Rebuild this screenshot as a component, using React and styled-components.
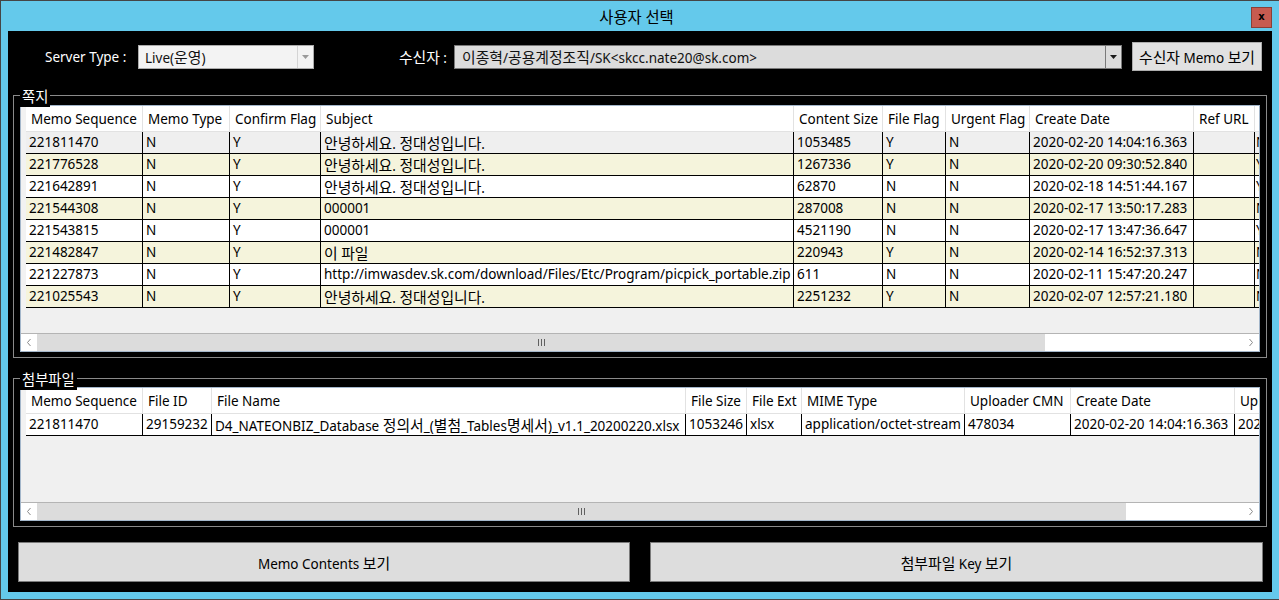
import React from "react";
import styled, { createGlobalStyle } from "styled-components";

const FONT = `"Noto Sans", "Noto Sans CJK KR", sans-serif`;

const GlobalStyle = createGlobalStyle`
  html, body { margin: 0; padding: 0; background: #64c9eb; }
  body { font-family: ${FONT}; font-size: 13.5px; color: #000; }
  * { box-sizing: border-box; }
`;

const Hangul = styled.span`
  font-family: "Noto Sans CJK KR", sans-serif;
  font-size: 1.1em;
`;

const HANGUL_RE = /([\u1100-\u11FF\u3130-\u318F\uAC00-\uD7A3]+)/;

function T({ children }) {
  const text = String(children);
  const parts = text.split(HANGUL_RE);
  return (
    <>
      {parts.map((p, i) =>
        i % 2 === 1 ? <Hangul key={i}>{p}</Hangul> : p ? <React.Fragment key={i}>{p}</React.Fragment> : null
      )}
    </>
  );
}

const Window = styled.div`
  width: 1279px;
  height: 600px;
  background: #64c9eb;
  border-top: 1px solid #454545;
  border-left: 1px solid #454545;
  border-bottom: 1px solid #454545;
  display: flex;
  flex-direction: column;
`;

const TitleBar = styled.div`
  height: 30px;
  flex: 0 0 30px;
  display: grid;
  grid-template-columns: 1fr auto 1fr;
  align-items: center;
  padding-right: 7px;
`;

const Title = styled.div`
  grid-column: 2;
  font-size: 14px;
  color: #000;
  line-height: 30px;
`;

const CloseButton = styled.div`
  grid-column: 3;
  justify-self: end;
  width: 21px;
  height: 21px;
  margin-top: 1px;
  background: #c75b50;
  border: 1px solid #8a3f38;
  display: flex;
  align-items: center;
  justify-content: center;
  font-family: "DejaVu Sans", sans-serif;
  font-weight: bold;
  font-size: 10px;
  line-height: 1;
  color: #000;
  padding-bottom: 2px;
`;

const Client = styled.div`
  margin: 0 7px 0 7px;
  height: 561px;
  background: #000;
  display: flex;
  flex-direction: column;
`;

const TopRow = styled.div`
  margin-top: 11px;
  height: 29px;
  padding-left: 37px;
  display: flex;
  align-items: center;
`;

const FieldLabel = styled.div`
  flex: 0 0 ${(p) => p.$w}px;
  color: #fff;
  text-align: ${(p) => p.$align || "left"};
  padding-right: ${(p) => p.$pr || 0}px;
  white-space: nowrap;
`;

const Combo = styled.div`
  flex: 0 0 ${(p) => p.$w}px;
  height: 24px;
  background: ${(p) => p.$bg};
  border: 1px solid ${(p) => p.$border};
  display: flex;
  align-items: stretch;
`;

const ComboText = styled.div`
  flex: 1;
  padding-left: ${(p) => p.$pl}px;
  line-height: 22px;
  color: #111;
  white-space: nowrap;
  overflow: hidden;
`;

const ComboArrow = styled.div`
  flex: 0 0 16px;
  border-left: 1px solid ${(p) => p.$sep};
  display: flex;
  align-items: center;
  justify-content: center;
`;

const Button = styled.div`
  flex: 0 0 ${(p) => p.$w}px;
  height: ${(p) => p.$h}px;
  margin-left: ${(p) => p.$ml || 0}px;
  background: ${(p) => p.$bg || "#e1e1e1"};
  border: 1px solid ${(p) => p.$border || "#adadad"};
  display: flex;
  align-items: center;
  justify-content: center;
  color: #000;
`;

const ButtonLabel = styled.span`
  white-space: nowrap;
`;

const Group = styled.div`
  position: relative;
  margin: ${(p) => p.$mt}px 0 0 5px;
  width: 1254px;
  height: ${(p) => p.$h}px;
  border: 1px solid #8a8a8a;
  padding: ${(p) => p.$pt}px 6px 5px 6px;
`;

const Legend = styled.div`
  position: absolute;
  left: 6px;
  top: -10px;
  padding: 0 2px;
  line-height: 19px;
  background: #000;
  color: #fff;
  font-size: 13px;
`;

const GridFrame = styled.div`
  width: 1240px;
  height: ${(p) => p.$h}px;
  border: 1px solid #a3b6ca;
  background: #f0f0f0;
  display: flex;
  flex-direction: column;
`;

const GridBody = styled.div`
  flex: 1;
  overflow: hidden;
`;

const HeaderRow = styled.div`
  display: flex;
  height: 26px;
  background: #fff;
  width: max-content;
`;

const DataRow = styled.div`
  display: flex;
  height: 22px;
  background: ${(p) => p.$bg};
  width: max-content;
`;

const RowHead = styled.div`
  flex: 0 0 5px;
  background: #f2f2f2;
`;

const HeaderCell = styled.div`
  flex: 0 0 ${(p) => p.$w}px;
  height: 26px;
  padding-left: 5px;
  padding-top: 2px;
  border-right: 1px solid #e2e2e2;
  border-bottom: 1px solid #e2e2e2;
  line-height: 23px;
  white-space: nowrap;
  overflow: hidden;
  color: #000;
`;

const Cell = styled.div`
  flex: 0 0 ${(p) => p.$w}px;
  height: 22px;
  padding-left: ${(p) => (p.$tight ? 1 : 3)}px;
  border-right: 1px solid #000;
  border-bottom: 1px solid #000;
  line-height: 21px;
  white-space: nowrap;
  overflow: hidden;
  color: #000;
`;

const ScrollBar = styled.div`
  flex: 0 0 18px;
  border-top: 1px solid #b4b4b4;
  background: #fff;
  display: flex;
`;

const ScrollArrow = styled.div`
  flex: 0 0 16px;
  background: #fff;
  display: flex;
  align-items: center;
  justify-content: center;
`;

const ScrollTrack = styled.div`
  flex: 1;
  display: flex;
  background: #fff;
`;

const Thumb = styled.div`
  flex: 0 0 ${(p) => p.$ratio}%;
  background: #dcdcdc;
  display: flex;
  align-items: center;
  justify-content: center;
  gap: 2px;
`;

const GripLine = styled.div`
  width: 1px;
  height: 7px;
  background: #606060;
`;

const BottomRow = styled.div`
  margin-top: 15px;
  padding-left: 10px;
  display: flex;
`;

const cols1 = [
  { label: "Memo Sequence", w: 117 },
  { label: "Memo Type", w: 87 },
  { label: "Confirm Flag", w: 91 },
  { label: "Subject", w: 473 },
  { label: "Content Size", w: 89 },
  { label: "File Flag", w: 63 },
  { label: "Urgent Flag", w: 84 },
  { label: "Create Date", w: 164 },
  { label: "Ref URL", w: 61 },
  { label: "Read Flag", w: 90, tight: true },
];

const HELLO = "안녕하세요. 정대성입니다.";
const rows1 = [
  ["221811470", "N", "Y", HELLO, "1053485", "Y", "N", "2020-02-20 14:04:16.363", "", "N"],
  ["221776528", "N", "Y", HELLO, "1267336", "Y", "N", "2020-02-20 09:30:52.840", "", "Y"],
  ["221642891", "N", "Y", HELLO, "62870", "N", "N", "2020-02-18 14:51:44.167", "", "Y"],
  ["221544308", "N", "Y", "000001", "287008", "N", "N", "2020-02-17 13:50:17.283", "", "N"],
  ["221543815", "N", "Y", "000001", "4521190", "N", "N", "2020-02-17 13:47:36.647", "", "Y"],
  ["221482847", "N", "Y", "이 파일", "220943", "Y", "N", "2020-02-14 16:52:37.313", "", "N"],
  ["221227873", "N", "Y", "http://imwasdev.sk.com/download/Files/Etc/Program/picpick_portable.zip", "611", "N", "N", "2020-02-11 15:47:20.247", "", "N"],
  ["221025543", "N", "Y", HELLO, "2251232", "Y", "N", "2020-02-07 12:57:21.180", "", "N"],
];
const rowBg1 = ["#efefef", "#f5f4dc", "#ffffff", "#f5f4dc", "#ffffff", "#f5f4dc", "#ffffff", "#f5f4dc"];

const cols2 = [
  { label: "Memo Sequence", w: 117 },
  { label: "File ID", w: 69 },
  { label: "File Name", w: 474 },
  { label: "File Size", w: 61 },
  { label: "File Ext", w: 55 },
  { label: "MIME Type", w: 163 },
  { label: "Uploader CMN", w: 106 },
  { label: "Create Date", w: 164 },
  { label: "Upload Flag", w: 120 },
];
const rows2 = [
  ["221811470", "29159232", "D4_NATEONBIZ_Database 정의서_(별첨_Tables명세서)_v1.1_20200220.xlsx", "1053246", "xlsx", "application/octet-stream", "478034", "2020-02-20 14:04:16.363", "2020-02-20 14:04:16.363"],
];
const rowBg2 = ["#ffffff"];

const DownTriangle = ({ color }) => (
  <svg width="7" height="4" viewBox="0 0 7 4">
    <path d="M0 0 H7 L3.5 4 Z" fill={color} />
  </svg>
);

const Chevron = ({ dir }) => (
  <svg width="6" height="9" viewBox="0 0 6 9">
    <path
      d={dir === "left" ? "M4.5 1 L1.5 4.5 L4.5 8" : "M1.5 1 L4.5 4.5 L1.5 8"}
      fill="none"
      stroke="#8a8a8a"
      strokeWidth="1"
    />
  </svg>
);

function DataGrid({ height, cols, rows, rowBgs, thumb }) {
  return (
    <GridFrame $h={height}>
      <GridBody>
        <HeaderRow>
          <RowHead />
          {cols.map((c, i) => (
            <HeaderCell key={i} $w={c.w}>
              {c.label}
            </HeaderCell>
          ))}
        </HeaderRow>
        {rows.map((r, ri) => (
          <DataRow key={ri} $bg={rowBgs[ri]}>
            <RowHead />
            {cols.map((c, ci) => (
              <Cell key={ci} $w={c.w} $tight={c.tight}>
                <T>{r[ci]}</T>
              </Cell>
            ))}
          </DataRow>
        ))}
      </GridBody>
      <ScrollBar>
        <ScrollArrow>
          <Chevron dir="left" />
        </ScrollArrow>
        <ScrollTrack>
          <Thumb $ratio={thumb}>
            <GripLine />
            <GripLine />
            <GripLine />
          </Thumb>
        </ScrollTrack>
        <ScrollArrow>
          <Chevron dir="right" />
        </ScrollArrow>
      </ScrollBar>
    </GridFrame>
  );
}

export default function App() {
  return (
    <>
      <GlobalStyle />
      <Window>
        <TitleBar>
          <Title>
            <T>사용자 선택</T>
          </Title>
          <CloseButton>x</CloseButton>
        </TitleBar>
        <Client>
          <TopRow>
            <FieldLabel $w={93}>Server Type :</FieldLabel>
            <Combo $w={176} $bg="#f3f3f3" $border="#acacac">
              <ComboText $pl={6}>
                <T>Live(운영)</T>
              </ComboText>
              <ComboArrow $sep="#d4d4d4">
                <DownTriangle color="#9a9a9a" />
              </ComboArrow>
            </Combo>
            <FieldLabel $w={140} $align="right" $pr={7}>
              <T>수신자 :</T>
            </FieldLabel>
            <Combo $w={668} $bg="#dcdcdc" $border="#7a7a7a">
              <ComboText $pl={7}>
                <T>이종혁/공용계정조직/SK&lt;skcc.nate20@sk.com&gt;</T>
              </ComboText>
              <ComboArrow $sep="#7a7a7a">
                <DownTriangle color="#1a1a1a" />
              </ComboArrow>
            </Combo>
            <Button $w={130} $h={29} $ml={10}>
              <ButtonLabel>
                <T>수신자 Memo 보기</T>
              </ButtonLabel>
            </Button>
          </TopRow>

          <Group $mt={24} $h={263} $pt={9}>
            <Legend>
              <T>쪽지</T>
            </Legend>
            <DataGrid height={247} cols={cols1} rows={rows1} rowBgs={rowBg1} thumb={83.6} />
          </Group>

          <Group $mt={20} $h={149} $pt={8}>
            <Legend>
              <T>첨부파일</T>
            </Legend>
            <DataGrid height={134} cols={cols2} rows={rows2} rowBgs={rowBg2} thumb={90.3} />
          </Group>

          <BottomRow>
            <Button $w={612} $h={40} $bg="#dddddd" $border="#7a7a7a">
              <ButtonLabel>
                <T>Memo Contents 보기</T>
              </ButtonLabel>
            </Button>
            <Button $w={613} $h={40} $ml={20} $bg="#dddddd" $border="#7a7a7a">
              <ButtonLabel>
                <T>첨부파일 Key 보기</T>
              </ButtonLabel>
            </Button>
          </BottomRow>
        </Client>
      </Window>
    </>
  );
}
